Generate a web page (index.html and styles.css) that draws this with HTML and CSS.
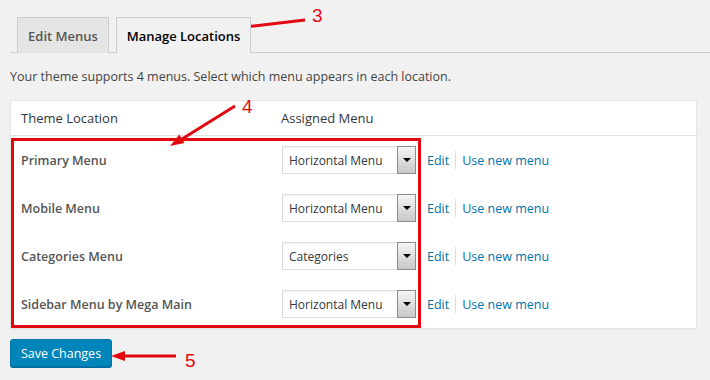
FILE: index.html
```html
<!DOCTYPE html>
<html>
<head>
<meta charset="utf-8">
<link rel="stylesheet" href="styles.css">
</head>
<body>
<div class="page">
  <div class="tabs">
    <span class="tab">Edit Menus</span>
    <span class="tab active">Manage Locations</span>
  </div>
  <p class="intro">Your theme supports 4 menus. Select which menu appears in each location.</p>
  <table class="locations">
    <thead>
      <tr><th class="c1">Theme Location</th><th class="c2">Assigned Menu</th></tr>
    </thead>
    <tbody>
      <tr>
        <td class="name">Primary Menu</td>
        <td><div class="cell"><div class="select"><span class="val">Horizontal Menu</span><span class="btn"><i></i></span></div><a class="link">Edit</a><span class="sep"></span><a class="link">Use new menu</a></div></td>
      </tr>
      <tr>
        <td class="name">Mobile Menu</td>
        <td><div class="cell"><div class="select"><span class="val">Horizontal Menu</span><span class="btn"><i></i></span></div><a class="link">Edit</a><span class="sep"></span><a class="link">Use new menu</a></div></td>
      </tr>
      <tr>
        <td class="name">Categories Menu</td>
        <td><div class="cell"><div class="select"><span class="val">Categories</span><span class="btn"><i></i></span></div><a class="link">Edit</a><span class="sep"></span><a class="link">Use new menu</a></div></td>
      </tr>
      <tr>
        <td class="name">Sidebar Menu by Mega Main</td>
        <td><div class="cell"><div class="select"><span class="val">Horizontal Menu</span><span class="btn"><i></i></span></div><a class="link">Edit</a><span class="sep"></span><a class="link">Use new menu</a></div></td>
      </tr>
    </tbody>
  </table>
  <div class="actions"><button class="save">Save Changes</button></div>

  <svg class="annot" width="710" height="380" viewBox="0 0 710 380">
    <rect x="12.5" y="139.5" width="407" height="187" fill="none" stroke="#e3070f" stroke-width="3"/>
    <line x1="305" y1="20" x2="249" y2="26.5" stroke="#e3070f" stroke-width="3"/>
    <polygon points="236,28 250.5,31.5 249.3,21.4" fill="#e3070f"/>
    <line x1="235" y1="106" x2="182" y2="139" stroke="#e3070f" stroke-width="3"/>
    <polygon points="170,146 184.5,143 179.3,134.4" fill="#e3070f"/>
    <line x1="176" y1="356" x2="124" y2="356" stroke="#e3070f" stroke-width="3"/>
    <polygon points="111,356 125,351 125,361" fill="#e3070f"/>
    <text x="312" y="22" class="num">3</text>
    <text x="242" y="113" class="num">4</text>
    <text x="185" y="367" class="num">5</text>
  </svg>
</div>
</body>
</html>
```
FILE: styles.css
```css
html, body {
  margin: 0;
  padding: 0;
  background: #f1f1f1;
}
body {
  font-family: "Open Sans", "Noto Sans", sans-serif;
  font-size: 13px;
  color: #444;
}
.page {
  position: relative;
  width: 710px;
  height: 380px;
  padding-left: 10px;
  box-sizing: border-box;
  overflow: hidden;
}
.tabs {
  padding-top: 17px;
  padding-left: 7px;
  display: flex;
  gap: 7px;
  border-bottom: 1px solid #ccc;
  height: 35px;
  box-sizing: content-box;
}
.tab {
  box-sizing: border-box;
  height: 36px;
  border: 1px solid #ccc;
  border-bottom: none;
  background: #e5e5e5;
  color: #555;
  font-size: 13px;
  font-weight: 600;
  display: flex;
  align-items: center;
  justify-content: center;
  white-space: nowrap;
  padding: 0;
  width: 92px;
}
.tab.active {
  background: #f1f1f1;
  color: #000;
  width: 135px;
  position: relative;
  z-index: 1;
  padding-top: 1px;
}
.intro {
  margin: 0;
  height: 47px;
  line-height: 47px;
  font-size: 12.5px;
  color: #444;
}
.locations {
  width: 687px;
  border-collapse: collapse;
  background: #fff;
  border: 1px solid #e5e5e5;
  box-shadow: 0 1px 1px rgba(0,0,0,.04);
}
.locations th {
  text-align: left;
  font-weight: 400;
  color: #32373c;
  height: 34px;
  padding: 0 10px;
  border-bottom: 1px solid #e1e1e1;
  font-size: 13px;
}
.locations th.c1 { width: 240px; }
.locations td {
  height: 48px;
  padding: 0 10px;
  vertical-align: middle;
}
.locations td.name {
  font-weight: 600;
  color: #555;
  font-size: 12.5px;
}
.cell {
  display: flex;
  align-items: center;
  padding-left: 1px;
}
.select {
  box-sizing: border-box;
  width: 134px;
  height: 28px;
  border: 1px solid #ddd;
  background: #fff;
  display: flex;
  align-items: stretch;
  box-shadow: inset 0 1px 2px rgba(0,0,0,.05);
}
.val {
  flex: 1;
  display: flex;
  align-items: center;
  padding-left: 6px;
  font-size: 12px;
  color: #32373c;
}
.btn {
  width: 17px;
  border: 1px solid #8a8a8a;
  background: linear-gradient(#f4f4f4, #c8c8c8);
  display: flex;
  align-items: center;
  justify-content: center;
  margin: -1px -1px -1px 0;
}
.btn i {
  width: 0;
  height: 0;
  border-left: 4px solid transparent;
  border-right: 4px solid transparent;
  border-top: 4px solid #000;
}
.link {
  color: #0073aa;
  font-size: 12.5px;
}
.select + .link { margin-left: 11px; }
.sep {
  display: inline-block;
  width: 1px;
  height: 18px;
  background: #ddd;
  margin: 0 6px 0 6px;
}
.actions {
  padding-top: 10px;
}
.save {
  box-sizing: border-box;
  width: 102px;
  height: 28px;
  background: #0085ba;
  border: 1px solid #0073aa;
  border-radius: 3px;
  color: #fff;
  font-family: "Open Sans", "Noto Sans", sans-serif;
  font-size: 12.5px;
  padding: 0;
  box-shadow: 0 1px 0 #006799;
}
.annot {
  position: absolute;
  left: 0;
  top: 0;
  pointer-events: none;
}
.num {
  font-family: "Liberation Sans", sans-serif;
  font-size: 19px;
  fill: #e3070f;
}
```
